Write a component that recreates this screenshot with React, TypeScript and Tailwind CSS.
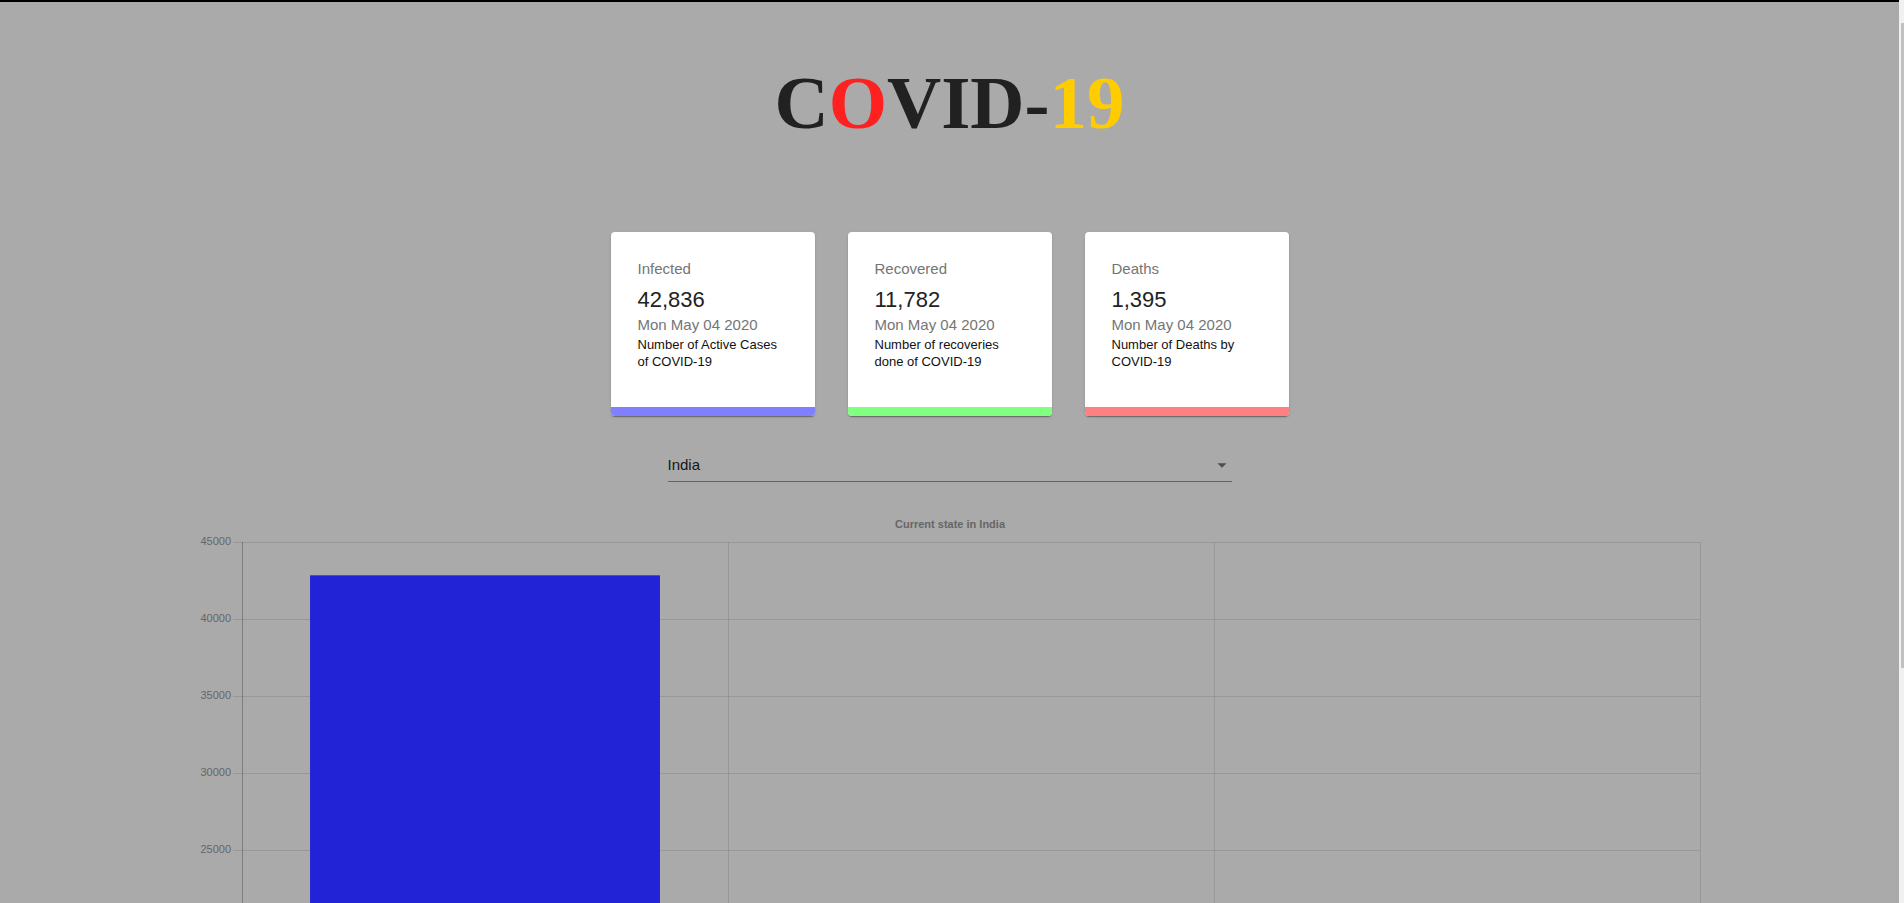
import React from "react";

const cards = [
  {
    title: "Infected",
    value: "42,836",
    text: "Number of Active Cases of COVID-19",
    bar: "bg-[#8080ff]",
  },
  {
    title: "Recovered",
    value: "11,782",
    text: "Number of recoveries done of COVID-19",
    bar: "bg-[#80ff80]",
  },
  {
    title: "Deaths",
    value: "1,395",
    text: "Number of Deaths by COVID-19",
    bar: "bg-[#ff8080]",
  },
];

const bars = [
  { label: "Infected", value: 42836, color: "#2222d6" },
  { label: "Recovered", value: 11782, color: "#55d455" },
  { label: "Deaths", value: 1395, color: "#d45555" },
];

function StatCard({ title, value, text, bar }: (typeof cards)[number]) {
  return (
    <div className="flex h-[184px] w-[204px] flex-col overflow-hidden rounded-[4px] bg-white shadow-[0_2px_1px_-1px_rgba(0,0,0,0.2),0_1px_1px_0_rgba(0,0,0,0.14),0_1px_3px_0_rgba(0,0,0,0.12)]">
      <div className="flex-1 px-[27px] pt-[26px]">
        <p className="mb-[6px] text-[15px] leading-[21px] text-[#757575]">{title}</p>
        <p className="text-[22px] leading-[29px] text-[#222]">{value}</p>
        <p className="text-[15px] leading-[22px] text-[#757575]">Mon May 04 2020</p>
        <p className="text-[13px] leading-[17px] text-[#111]">{text}</p>
      </div>
      <div className={`h-[9px] ${bar}`} />
    </div>
  );
}

function BarChart() {
  const left = 52;
  const right = 1510;
  const top = 37;
  const step = 77;
  const zero = top + 9 * step;
  const cat = (right - left) / 3;
  const barW = cat * 0.72;
  const ticks = [45000, 40000, 35000, 30000, 25000, 20000, 15000, 10000, 5000, 0];

  return (
    <svg width="1520" height="757" className="block font-['Liberation_Sans',Arial,sans-serif]">
      <text x="760" y="20" textAnchor="middle" dominantBaseline="middle" fontSize="11" fontWeight="bold" fill="#666">
        Current state in India
      </text>

      {ticks.map((t, i) => {
        const y = top + i * step + 0.5;
        return (
          <g key={t}>
            <line x1={left - 9} x2={right} y1={y} y2={y} stroke={t === 0 ? "rgba(0,0,0,0.25)" : "rgba(0,0,0,0.1)"} />
            <text x={left - 11} y={y} textAnchor="end" dominantBaseline="middle" fontSize="11" fill="#666">
              {t}
            </text>
          </g>
        );
      })}

      {[0, 1, 2, 3].map((i) => {
        const x = Math.round(left + i * cat) + 0.5;
        return (
          <line key={i} x1={x} x2={x} y1={top} y2={zero + 9} stroke={i === 0 ? "rgba(0,0,0,0.25)" : "rgba(0,0,0,0.1)"} />
        );
      })}

      {bars.map((b, i) => {
        const h = (b.value / 5000) * step;
        const x = left + i * cat + (cat - barW) / 2;
        return (
          <g key={b.label}>
            <rect x={x} y={zero - h} width={barW} height={h} fill={b.color} />
            <text x={left + i * cat + cat / 2} y={zero + 18} textAnchor="middle" dominantBaseline="middle" fontSize="11" fill="#666">
              {b.label}
            </text>
          </g>
        );
      })}
    </svg>
  );
}

export default function App() {
  return (
    <div className="flex h-screen bg-[#aaaaaa] font-['Liberation_Sans',Arial,sans-serif]">
      <main className="flex-1 overflow-y-auto [scrollbar-width:none]">
        <div className="h-[2px] bg-black" />

        <h1 className="mt-[63px] text-center font-['Liberation_Serif','Times_New_Roman',serif] text-[75px] font-bold leading-[75px] text-[#212121]">
          C<span className="text-[#ff2020]">O</span>VID-<span className="text-[#ffcc00]">19</span>
        </h1>

        <section className="mt-[92px] flex justify-center gap-[33px]">
          {cards.map((c) => (
            <StatCard key={c.title} {...c} />
          ))}
        </section>

        <div className="mx-auto mt-[34px] flex w-[564px] items-center justify-between border-b border-[#636363] pt-[4px] pb-[5px]">
          <span className="text-[15px] leading-[20px] text-[#161616]">India</span>
          <svg width="22" height="22" viewBox="0 0 24 24" className="-mr-[1px]">
            <path d="M7 10l5 5 5-5z" fill="#4e4e4e" />
          </svg>
        </div>

        <div className="mx-auto mt-[23px] w-[1520px]">
          <BarChart />
        </div>
      </main>

      {/* page scrollbar */}
      <div className="w-[5px] bg-[#f1f1f1]">
        <div className="mt-[23px] ml-[2px] h-[645px] bg-[#c1c1c1]" />
      </div>
    </div>
  );
}
